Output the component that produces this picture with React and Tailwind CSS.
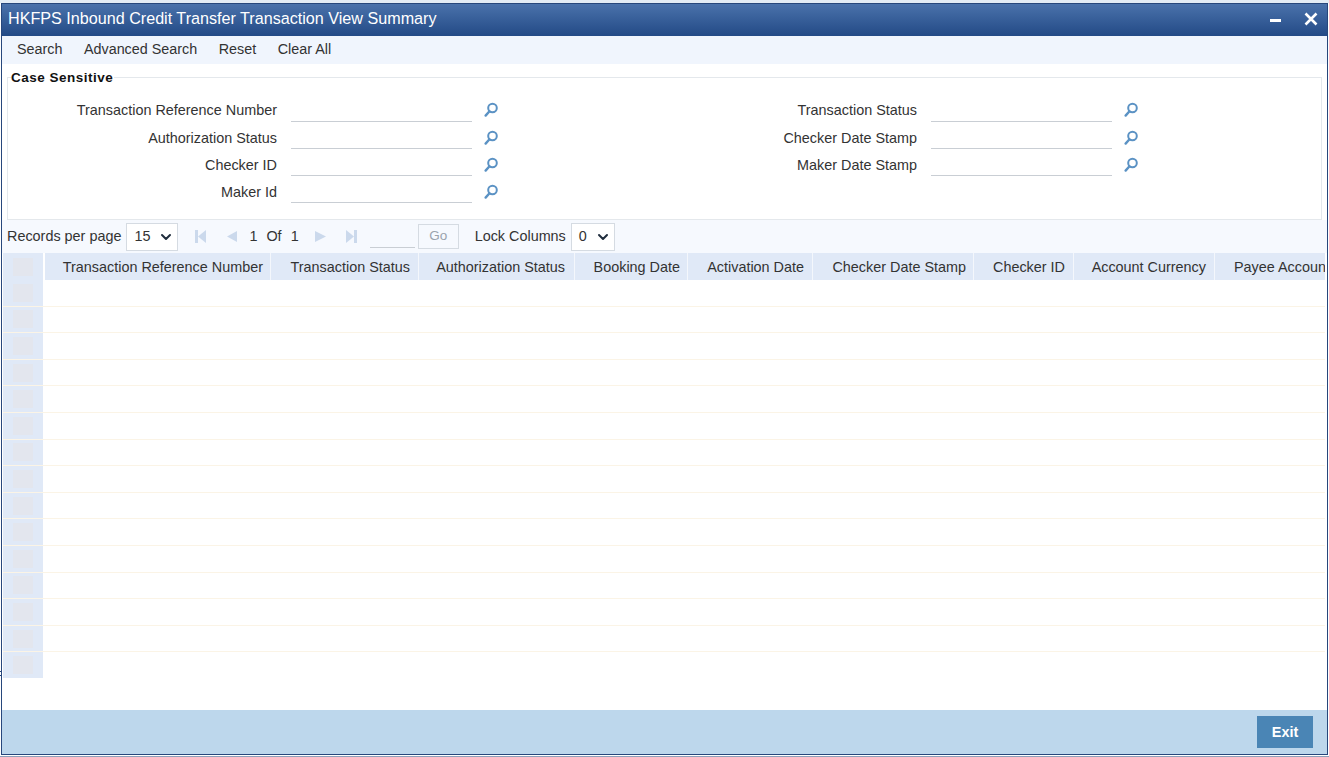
import { ChevronDown } from "lucide-react";

const font = "font-['Liberation_Sans',Arial,sans-serif]";

const leftFields = ["Transaction Reference Number", "Authorization Status", "Checker ID", "Maker Id"];
const rightFields = ["Transaction Status", "Checker Date Stamp", "Maker Date Stamp"];

const columns = [
    { title: "Transaction Reference Number", width: "w-[226px] pr-[7px]" },
    { title: "Transaction Status", width: "w-[148px] pr-[8px]" },
    { title: "Authorization Status", width: "w-[156px] pr-[9px]" },
    { title: "Booking Date", width: "w-[113px] pr-[7px]" },
    { title: "Activation Date", width: "w-[125px] pr-[8px]" },
    { title: "Checker Date Stamp", width: "w-[161px] pr-[7px]" },
    { title: "Checker ID", width: "w-[100px] pr-[8px]" },
    { title: "Account Currency", width: "w-[141px] pr-[8px]" },
];

const rows = Array.from({ length: 15 }, (_, i) => i);

function SearchIcon() {
    return (
        <svg width="16" height="16" viewBox="0 0 16 16" fill="none" className="shrink-0">
            <circle cx="9.5" cy="6" r="4.3" stroke="#5b92c4" strokeWidth="2" />
            <path d="M6.5 9.3 L2.6 13.6" stroke="#5b92c4" strokeWidth="2.4" strokeLinecap="round" />
        </svg>
    );
}

function Field({ label }) {
    return (
        <div className="flex items-center h-[27px] first:h-[28px]">
            <label className="w-[269px] text-right text-[14.4px] text-[#333] relative top-[1px]">{label}</label>
            <div className="ml-[14px] w-[181px] h-[23px] border-b border-[#c9ced4]"></div>
            <div className="ml-[11px]"><SearchIcon /></div>
        </div>
    );
}

function PageIcon({ dir, end }) {
    const fill = "#cbd9ec";
    if (dir === "left") {
        return end ? (
            <svg width="11" height="13" viewBox="0 0 11 13" className="shrink-0" fill={fill}>
                <rect x="0" y="0" width="3" height="13" />
                <path d="M11 0 V13 L3 6.5 Z" />
            </svg>
        ) : (
            <svg width="10" height="11" viewBox="0 0 10 11" className="shrink-0" fill={fill}>
                <path d="M10 0 V11 L0 5.5 Z" />
            </svg>
        );
    }
    return end ? (
        <svg width="11" height="13" viewBox="0 0 11 13" className="shrink-0" fill={fill}>
            <rect x="8" y="0" width="3" height="13" />
            <path d="M0 0 V13 L8 6.5 Z" />
        </svg>
    ) : (
        <svg width="11" height="11" viewBox="0 0 11 11" className="shrink-0" fill={fill}>
            <path d="M0 0 V11 L11 5.5 Z" />
        </svg>
    );
}

function SelectBox({ value, width }) {
    return (
        <div className={`${width} h-[28px] border border-[#d5dbe2] bg-white flex items-center justify-between pl-[7px] pr-[3px] text-[14.4px] text-[#333]`}>
            <span>{value}</span>
            <ChevronDown size={16} strokeWidth={3} color="#1f2d3d" />
        </div>
    );
}

export default function App() {
    return (
        <div className={`${font} relative w-[1329px] h-[757px] bg-white overflow-hidden`}>
            <div className="h-[3px] bg-[#e3ecf5]"></div>
            <div className="absolute left-0 top-[671px] w-[2px] h-[1px] bg-[#27477c]"></div>
            <div className="absolute left-0 top-[675px] w-[2px] h-[1px] bg-[#27477c]"></div>
            <div className="ml-[1px] w-[1327px] h-[752px] border border-[#27477c] flex flex-col">
                <header className="h-[32px] shrink-0 bg-gradient-to-b from-[#4a72ab] to-[#234a86] flex items-center justify-between pl-[6px] pr-[9px]">
                    <h1 className="text-[16.15px] text-white relative top-[-2px]">HKFPS Inbound Credit Transfer Transaction View Summary</h1>
                    <div className="flex items-center gap-[23px] relative top-[-1px]">
                        <div className="w-[11px] h-[3px] bg-white relative top-[1px]"></div>
                        <svg width="14" height="14" viewBox="0 0 14 14"><path d="M1.5 1.5 L12.5 12.5 M12.5 1.5 L1.5 12.5" stroke="#fff" strokeWidth="2.6" /></svg>
                    </div>
                </header>

                <nav className="h-[28px] shrink-0 bg-[#f0f5fd] flex items-center gap-[21.5px] pl-[15px] text-[14.35px] text-[#333]">
                    <span>Search</span>
                    <span>Advanced Search</span>
                    <span>Reset</span>
                    <span>Clear All</span>
                </nav>

                <div className="px-[5px] pt-[6px]">
                    <fieldset className="relative border border-[#e4e8ec] mt-[7px] h-[143px] grid grid-cols-[640px_1fr] pt-[18px]">
                        <legend className="absolute left-[3px] top-[-8px] bg-white pr-[1px] text-[13.5px] font-bold tracking-[0.5px] text-[#111] leading-[16px]">Case Sensitive</legend>
                        <div>
                            {leftFields.map((f) => <Field key={f} label={f} />)}
                        </div>
                        <div>
                            {rightFields.map((f) => <Field key={f} label={f} />)}
                        </div>
                    </fieldset>
                </div>

                <div className="h-[33px] shrink-0 bg-[#f6f9fe] flex items-center pl-[5px] text-[14.4px] text-[#333]">
                    <span>Records per page</span>
                    <div className="ml-[5px]"><SelectBox value="15" width="w-[52px]" /></div>
                    <div className="ml-[17px]"><PageIcon dir="left" end /></div>
                    <div className="ml-[21px]"><PageIcon dir="left" /></div>
                    <span className="ml-[12px]">1</span>
                    <span className="ml-[9px]">Of</span>
                    <span className="ml-[9px]">1</span>
                    <div className="ml-[16px]"><PageIcon dir="right" /></div>
                    <div className="ml-[20px]"><PageIcon dir="right" end /></div>
                    <div className="ml-[13px] w-[45px] h-[22px] border-b border-[#c9ced4]"></div>
                    <button className="ml-[3px] w-[41px] h-[25px] border border-[#d5dbe2] text-[13.5px] text-[#9aa3ad] bg-[#f6f9fe]">Go</button>
                    <span className="ml-[16px]">Lock Columns</span>
                    <div className="ml-[5px]"><SelectBox value="0" width="w-[44px]" /></div>
                </div>

                <div className="flex-1 overflow-hidden mr-[2px] ml-[1px]">
                    <div className="flex h-[27px] bg-[#e0e9f7]">
                        <div className="w-[42px] shrink-0 flex items-center justify-center border-r-2 border-white"><div className="w-[20px] h-[18px] bg-[#e3e6ee]"></div></div>
                        {columns.map((c) => (
                            <div key={c.title} className={`${c.width} shrink-0 flex items-center justify-end pt-[2px] border-r border-[#f4f7fc] text-[14.4px] text-[#333] whitespace-nowrap`}>
                                {c.title}
                            </div>
                        ))}
                        <div className="flex-1 min-w-0 overflow-hidden pl-[19px] pt-[2px] flex items-center text-[14.4px] text-[#333] whitespace-nowrap">Payee Account Number</div>
                    </div>
                    {rows.map((r) => (
                        <div key={r} className="flex h-[26.6px] border-b border-[#fbf4e6] last:border-b-0 last:h-[26px]">
                            <div className="w-[42px] shrink-0 flex items-center justify-center bg-[#e0e9f7] border-r-2 border-white"><div className="w-[20px] h-[18px] bg-[#e3e6ee]"></div></div>
                            <div className="flex-1"></div>
                        </div>
                    ))}
                </div>

                <footer className="h-[44px] shrink-0 bg-[#bdd7ec] flex items-center justify-end pr-[14px]">
                    <button className="w-[56px] h-[32px] pt-[1px] bg-[#4a85b5] text-white font-bold text-[14.4px]">Exit</button>
                </footer>
            </div>
            <div className="mt-[1px] h-[1px] bg-[#8c9fb8]"></div>
        </div>
    );
}
